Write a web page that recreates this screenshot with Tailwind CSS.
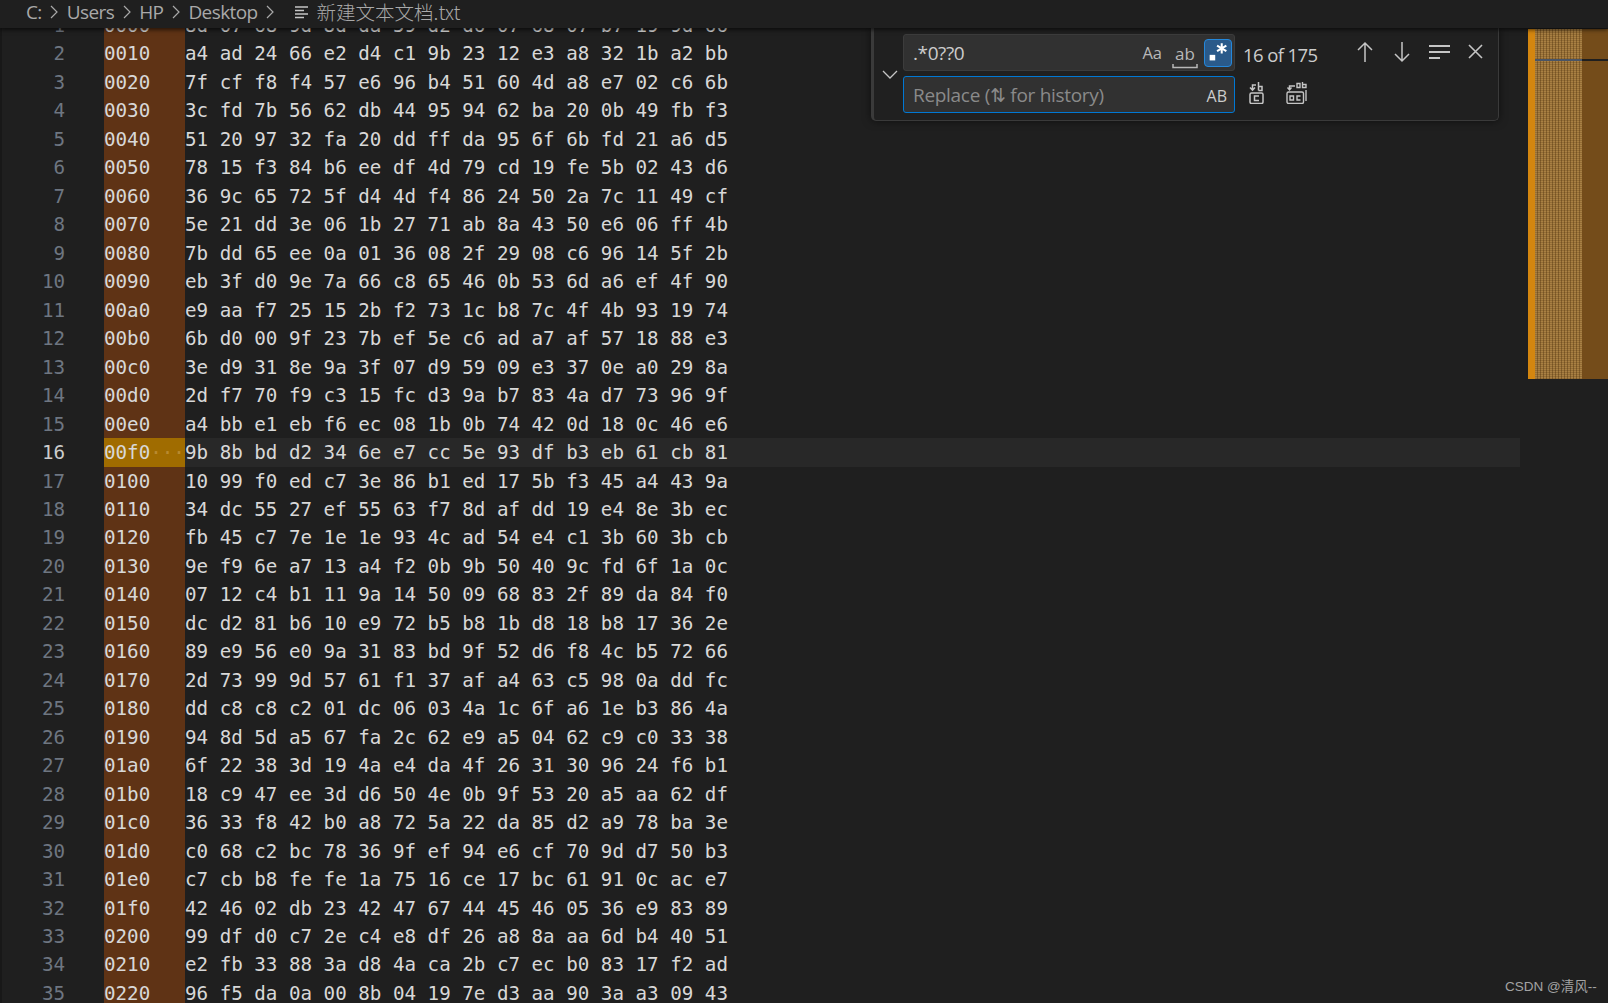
<!doctype html>
<html>
<head>
<meta charset="utf-8">
<script src="https://cdn.jsdelivr.net/npm/@tailwindcss/browser@4"></script>
</head>
<body class="bg-[#1f1f1f]">
<div class="relative flex h-[1003px] w-[1608px] flex-col overflow-hidden bg-[#1f1f1f]">

  <!-- breadcrumb -->
  <header class="relative z-20 flex h-[28px] shrink-0 items-center bg-[#1f1f1f] pb-[4px] pl-[26px] font-['Open_Sans',sans-serif] text-[19px] tracking-[-0.6px] text-[#a9a9a9] shadow-[0_2px_4px_rgba(0,0,0,0.6)]">
    <span>C:</span>
    <svg class="mx-[7.5px] h-[16px] w-[10px]" viewBox="0 0 10 16" fill="none" stroke="#a9a9a9" stroke-width="1.2"><path d="M2 2l6 6-6 6"/></svg>
    <span>Users</span>
    <svg class="mx-[7.5px] h-[16px] w-[10px]" viewBox="0 0 10 16" fill="none" stroke="#a9a9a9" stroke-width="1.2"><path d="M2 2l6 6-6 6"/></svg>
    <span>HP</span>
    <svg class="mx-[7.5px] h-[16px] w-[10px]" viewBox="0 0 10 16" fill="none" stroke="#a9a9a9" stroke-width="1.2"><path d="M2 2l6 6-6 6"/></svg>
    <span>Desktop</span>
    <svg class="mx-[7.5px] h-[16px] w-[10px]" viewBox="0 0 10 16" fill="none" stroke="#a9a9a9" stroke-width="1.2"><path d="M2 2l6 6-6 6"/></svg>
    <svg class="ml-[11px] mr-[8px] h-[14px] w-[15px]" viewBox="0 0 15 14" fill="none" stroke="#c5c5c5" stroke-width="1.4"><path d="M1 2h13M1 5.500h9M1 9h13M1 12.500h9"/></svg>
    <span class="font-['Noto_Sans_CJK_SC','Open_Sans',sans-serif] text-[19.5px] font-light tracking-normal">新建文本文档.txt</span>
  </header>

  <!-- editor: the first line is scrolled partly under the breadcrumb -->
  <div class="relative min-h-0 flex-1 overflow-hidden">
  <main class="ml-[3px] mt-[-17px] grid w-[1517px] grid-cols-[62px_39px_81px_1335px] auto-rows-[28.47px] font-['DejaVu_Sans_Mono',monospace] text-[19.2px] leading-[29.4px] text-[#d8d8d8]">
    <p class="text-right text-[#6e7681]">1</p><p class="col-start-3 bg-[#5f3315]">0000</p><p>8d 07 68 9d 8d da 59 d2 d6 07 68 07 b7 19 9d 66</p>
    <p class="text-right text-[#6e7681]">2</p><p class="col-start-3 bg-[#5f3315]">0010</p><p>a4 ad 24 66 e2 d4 c1 9b 23 12 e3 a8 32 1b a2 bb</p>
    <p class="text-right text-[#6e7681]">3</p><p class="col-start-3 bg-[#5f3315]">0020</p><p>7f cf f8 f4 57 e6 96 b4 51 60 4d a8 e7 02 c6 6b</p>
    <p class="text-right text-[#6e7681]">4</p><p class="col-start-3 bg-[#5f3315]">0030</p><p>3c fd 7b 56 62 db 44 95 94 62 ba 20 0b 49 fb f3</p>
    <p class="text-right text-[#6e7681]">5</p><p class="col-start-3 bg-[#5f3315]">0040</p><p>51 20 97 32 fa 20 dd ff da 95 6f 6b fd 21 a6 d5</p>
    <p class="text-right text-[#6e7681]">6</p><p class="col-start-3 bg-[#5f3315]">0050</p><p>78 15 f3 84 b6 ee df 4d 79 cd 19 fe 5b 02 43 d6</p>
    <p class="text-right text-[#6e7681]">7</p><p class="col-start-3 bg-[#5f3315]">0060</p><p>36 9c 65 72 5f d4 4d f4 86 24 50 2a 7c 11 49 cf</p>
    <p class="text-right text-[#6e7681]">8</p><p class="col-start-3 bg-[#5f3315]">0070</p><p>5e 21 dd 3e 06 1b 27 71 ab 8a 43 50 e6 06 ff 4b</p>
    <p class="text-right text-[#6e7681]">9</p><p class="col-start-3 bg-[#5f3315]">0080</p><p>7b dd 65 ee 0a 01 36 08 2f 29 08 c6 96 14 5f 2b</p>
    <p class="text-right text-[#6e7681]">10</p><p class="col-start-3 bg-[#5f3315]">0090</p><p>eb 3f d0 9e 7a 66 c8 65 46 0b 53 6d a6 ef 4f 90</p>
    <p class="text-right text-[#6e7681]">11</p><p class="col-start-3 bg-[#5f3315]">00a0</p><p>e9 aa f7 25 15 2b f2 73 1c b8 7c 4f 4b 93 19 74</p>
    <p class="text-right text-[#6e7681]">12</p><p class="col-start-3 bg-[#5f3315]">00b0</p><p>6b d0 00 9f 23 7b ef 5e c6 ad a7 af 57 18 88 e3</p>
    <p class="text-right text-[#6e7681]">13</p><p class="col-start-3 bg-[#5f3315]">00c0</p><p>3e d9 31 8e 9a 3f 07 d9 59 09 e3 37 0e a0 29 8a</p>
    <p class="text-right text-[#6e7681]">14</p><p class="col-start-3 bg-[#5f3315]">00d0</p><p>2d f7 70 f9 c3 15 fc d3 9a b7 83 4a d7 73 96 9f</p>
    <p class="text-right text-[#6e7681]">15</p><p class="col-start-3 bg-[#5f3315]">00e0</p><p>a4 bb e1 eb f6 ec 08 1b 0b 74 42 0d 18 0c 46 e6</p>
    <p class="text-right text-[#cccccc]">16</p><p class="col-start-3 whitespace-pre bg-[#a06c00]">00f0<span class="text-[#b98a30]">···</span></p><p class="bg-[#282828]">9b 8b bd d2 34 6e e7 cc 5e 93 df b3 eb 61 cb 81</p>
    <p class="text-right text-[#6e7681]">17</p><p class="col-start-3 bg-[#5f3315]">0100</p><p>10 99 f0 ed c7 3e 86 b1 ed 17 5b f3 45 a4 43 9a</p>
    <p class="text-right text-[#6e7681]">18</p><p class="col-start-3 bg-[#5f3315]">0110</p><p>34 dc 55 27 ef 55 63 f7 8d af dd 19 e4 8e 3b ec</p>
    <p class="text-right text-[#6e7681]">19</p><p class="col-start-3 bg-[#5f3315]">0120</p><p>fb 45 c7 7e 1e 1e 93 4c ad 54 e4 c1 3b 60 3b cb</p>
    <p class="text-right text-[#6e7681]">20</p><p class="col-start-3 bg-[#5f3315]">0130</p><p>9e f9 6e a7 13 a4 f2 0b 9b 50 40 9c fd 6f 1a 0c</p>
    <p class="text-right text-[#6e7681]">21</p><p class="col-start-3 bg-[#5f3315]">0140</p><p>07 12 c4 b1 11 9a 14 50 09 68 83 2f 89 da 84 f0</p>
    <p class="text-right text-[#6e7681]">22</p><p class="col-start-3 bg-[#5f3315]">0150</p><p>dc d2 81 b6 10 e9 72 b5 b8 1b d8 18 b8 17 36 2e</p>
    <p class="text-right text-[#6e7681]">23</p><p class="col-start-3 bg-[#5f3315]">0160</p><p>89 e9 56 e0 9a 31 83 bd 9f 52 d6 f8 4c b5 72 66</p>
    <p class="text-right text-[#6e7681]">24</p><p class="col-start-3 bg-[#5f3315]">0170</p><p>2d 73 99 9d 57 61 f1 37 af a4 63 c5 98 0a dd fc</p>
    <p class="text-right text-[#6e7681]">25</p><p class="col-start-3 bg-[#5f3315]">0180</p><p>dd c8 c8 c2 01 dc 06 03 4a 1c 6f a6 1e b3 86 4a</p>
    <p class="text-right text-[#6e7681]">26</p><p class="col-start-3 bg-[#5f3315]">0190</p><p>94 8d 5d a5 67 fa 2c 62 e9 a5 04 62 c9 c0 33 38</p>
    <p class="text-right text-[#6e7681]">27</p><p class="col-start-3 bg-[#5f3315]">01a0</p><p>6f 22 38 3d 19 4a e4 da 4f 26 31 30 96 24 f6 b1</p>
    <p class="text-right text-[#6e7681]">28</p><p class="col-start-3 bg-[#5f3315]">01b0</p><p>18 c9 47 ee 3d d6 50 4e 0b 9f 53 20 a5 aa 62 df</p>
    <p class="text-right text-[#6e7681]">29</p><p class="col-start-3 bg-[#5f3315]">01c0</p><p>36 33 f8 42 b0 a8 72 5a 22 da 85 d2 a9 78 ba 3e</p>
    <p class="text-right text-[#6e7681]">30</p><p class="col-start-3 bg-[#5f3315]">01d0</p><p>c0 68 c2 bc 78 36 9f ef 94 e6 cf 70 9d d7 50 b3</p>
    <p class="text-right text-[#6e7681]">31</p><p class="col-start-3 bg-[#5f3315]">01e0</p><p>c7 cb b8 fe fe 1a 75 16 ce 17 bc 61 91 0c ac e7</p>
    <p class="text-right text-[#6e7681]">32</p><p class="col-start-3 bg-[#5f3315]">01f0</p><p>42 46 02 db 23 42 47 67 44 45 46 05 36 e9 83 89</p>
    <p class="text-right text-[#6e7681]">33</p><p class="col-start-3 bg-[#5f3315]">0200</p><p>99 df d0 c7 2e c4 e8 df 26 a8 8a aa 6d b4 40 51</p>
    <p class="text-right text-[#6e7681]">34</p><p class="col-start-3 bg-[#5f3315]">0210</p><p>e2 fb 33 88 3a d8 4a ca 2b c7 ec b0 83 17 f2 ad</p>
    <p class="text-right text-[#6e7681]">35</p><p class="col-start-3 bg-[#5f3315]">0220</p><p>96 f5 da 0a 00 8b 04 19 7e d3 aa 90 3a a3 09 43</p>
  </main>
  </div>

  <!-- activity strip on the far left -->
  <div class="absolute bottom-0 left-0 top-[28px] z-10 w-[2px] bg-[#181818]"></div>

  <!-- find widget -->
  <section class="absolute left-[871px] top-[28px] z-10 h-[93px] w-[628px] rounded-b-[5px] border-b border-r border-l-[3px] border-[#3a3a3a] bg-[#202020] font-['Open_Sans',sans-serif] text-[#cccccc] shadow-[0_0_8px_rgba(0,0,0,0.55)]">
    <svg class="absolute left-[8px] top-[40px] h-[14px] w-[16px]" viewBox="0 0 16 14" fill="none" stroke="#c5c5c5" stroke-width="1.3"><path d="M1 3l7 7 7-7"/></svg>
    <!-- find row -->
    <div class="absolute left-[29px] top-[6px] flex h-[37px] w-[332px] items-center rounded-[3px] border border-[#3c3c3c] bg-[#313131] pl-[9px] pt-[2px] text-[19px] tracking-[-0.4px]">
      <span>.*0??0</span>
      <span class="ml-auto text-[16.5px] tracking-[0] text-[#b8b8b8]">Aa</span>
      <span class="relative ml-[10px] mr-[6px] w-[26px] text-center text-[17px] leading-[20px] tracking-[0] text-[#b8b8b8]">ab
        <svg class="absolute bottom-[-5px] left-0 h-[5px] w-[26px]" viewBox="0 0 26 5" fill="none" stroke="#b8b8b8" stroke-width="1.5"><path d="M1 0v3.500h24V0"/></svg>
      </span>
      <svg class="mr-[2px] mt-[-2px] h-[28px] w-[28px] rounded-[4px] border border-[#2488db] bg-[#2a5a8a]" viewBox="0 0 28 28" fill="none" stroke="#ffffff" stroke-width="2.2"><rect x="5" y="16" width="6" height="6" fill="#ffffff" stroke="none"/><path d="M18 3.500v11M13 6l10 6M23 6l-10 6"/></svg>
    </div>
    <span class="absolute left-[369px] top-[13px] text-[18.5px] tracking-[-0.6px] text-[#cccccc]">16 of 175</span>
    <svg class="absolute left-[481px] top-[13px] h-[22px] w-[20px]" viewBox="0 0 20 22" fill="none" stroke="#c5c5c5" stroke-width="1.5"><path d="M10 21V2M3 9l7-7 7 7"/></svg>
    <svg class="absolute left-[518px] top-[13px] h-[22px] w-[20px]" viewBox="0 0 20 22" fill="none" stroke="#c5c5c5" stroke-width="1.5"><path d="M10 1v19M3 13l7 7 7-7"/></svg>
    <svg class="absolute left-[554px] top-[16px] h-[16px] w-[23px]" viewBox="0 0 23 16" fill="none" stroke="#c5c5c5" stroke-width="1.8"><path d="M1 2h21M1 8h21M1 14h11"/></svg>
    <svg class="absolute left-[594px] top-[16px] h-[15px] w-[15px]" viewBox="0 0 15 15" fill="none" stroke="#c5c5c5" stroke-width="1.6"><path d="M1 1l13 13M14 1L1 14"/></svg>
    <!-- replace row -->
    <div class="absolute left-[29px] top-[48px] flex h-[37px] w-[332px] items-center rounded-[3px] border border-[#0078d4] bg-[#313131] pl-[9px] pr-[7px] pt-[2px] text-[19px] tracking-[-0.3px]">
      <span class="text-[#8a8a8a]">Replace (⇅ for history)</span>
      <span class="ml-auto text-[16px] tracking-[0] text-[#cccccc]">AB</span>
    </div>
    <svg class="absolute left-[374px] top-[54px] h-[22px] w-[17px]" viewBox="0 0 17 22" fill="none" stroke="#c5c5c5" stroke-width="1.5"><path d="M8 3H4.500v5M2 5.500l2.500 2.700L7 5.500"/><path d="M10.500 0v8.500M10.500 4.500h3.500v4h-3.500"/><rect x="2" y="11" width="13" height="10.500" rx="1.500"/><path d="M11 14H6.500v4.500H11"/></svg>
    <svg class="absolute left-[412px] top-[54px] h-[22px] w-[21px]" viewBox="0 0 21 22" fill="none" stroke="#c5c5c5" stroke-width="1.400"><path d="M9 4H3.500v4M1.500 5.500l2 2.500 2-2.500"/><path d="M11 1.500h3v4h-3zM16.500 0v5.500h3.500V2.500h-3.500"/><rect x="1" y="10" width="16.500" height="11.500" rx="1.500"/><path d="M20 8v11"/><path d="M4 14h3.500v4H4zM14.500 14H11v4h3.500"/></svg>
  </section>

  <!-- minimap -->
  <aside class="absolute left-[1528px] top-[29px] z-10 flex h-[350px] w-[80px] bg-[#744c1a]">
    <div class="h-full w-[7px] bg-[#d4860f]"></div>
    <div class="relative h-full w-[47px] bg-[repeating-linear-gradient(90deg,#a98043_0,#a98043_2px,#85602c_2px,#85602c_3px)]">
      <div class="absolute inset-0 bg-[repeating-linear-gradient(0deg,rgba(60,35,5,0.2)_0,rgba(60,35,5,0.2)_1px,transparent_1px,transparent_2px)]"></div>
    </div>
    <div class="absolute left-[7px] right-0 top-[30px] h-[2px] bg-[#1f1f1f]"></div>
    <div class="absolute left-[7px] top-[30px] h-[2px] w-[47px] bg-[#4a5566]"></div>
  </aside>

  <!-- watermark -->
  <span class="absolute left-[1505px] top-[977px] z-10 font-['Liberation_Sans','Noto_Sans_CJK_SC',sans-serif] text-[13.5px] text-[#a3a3a3]">CSDN @清风--</span>
</div>
</body>
</html>
